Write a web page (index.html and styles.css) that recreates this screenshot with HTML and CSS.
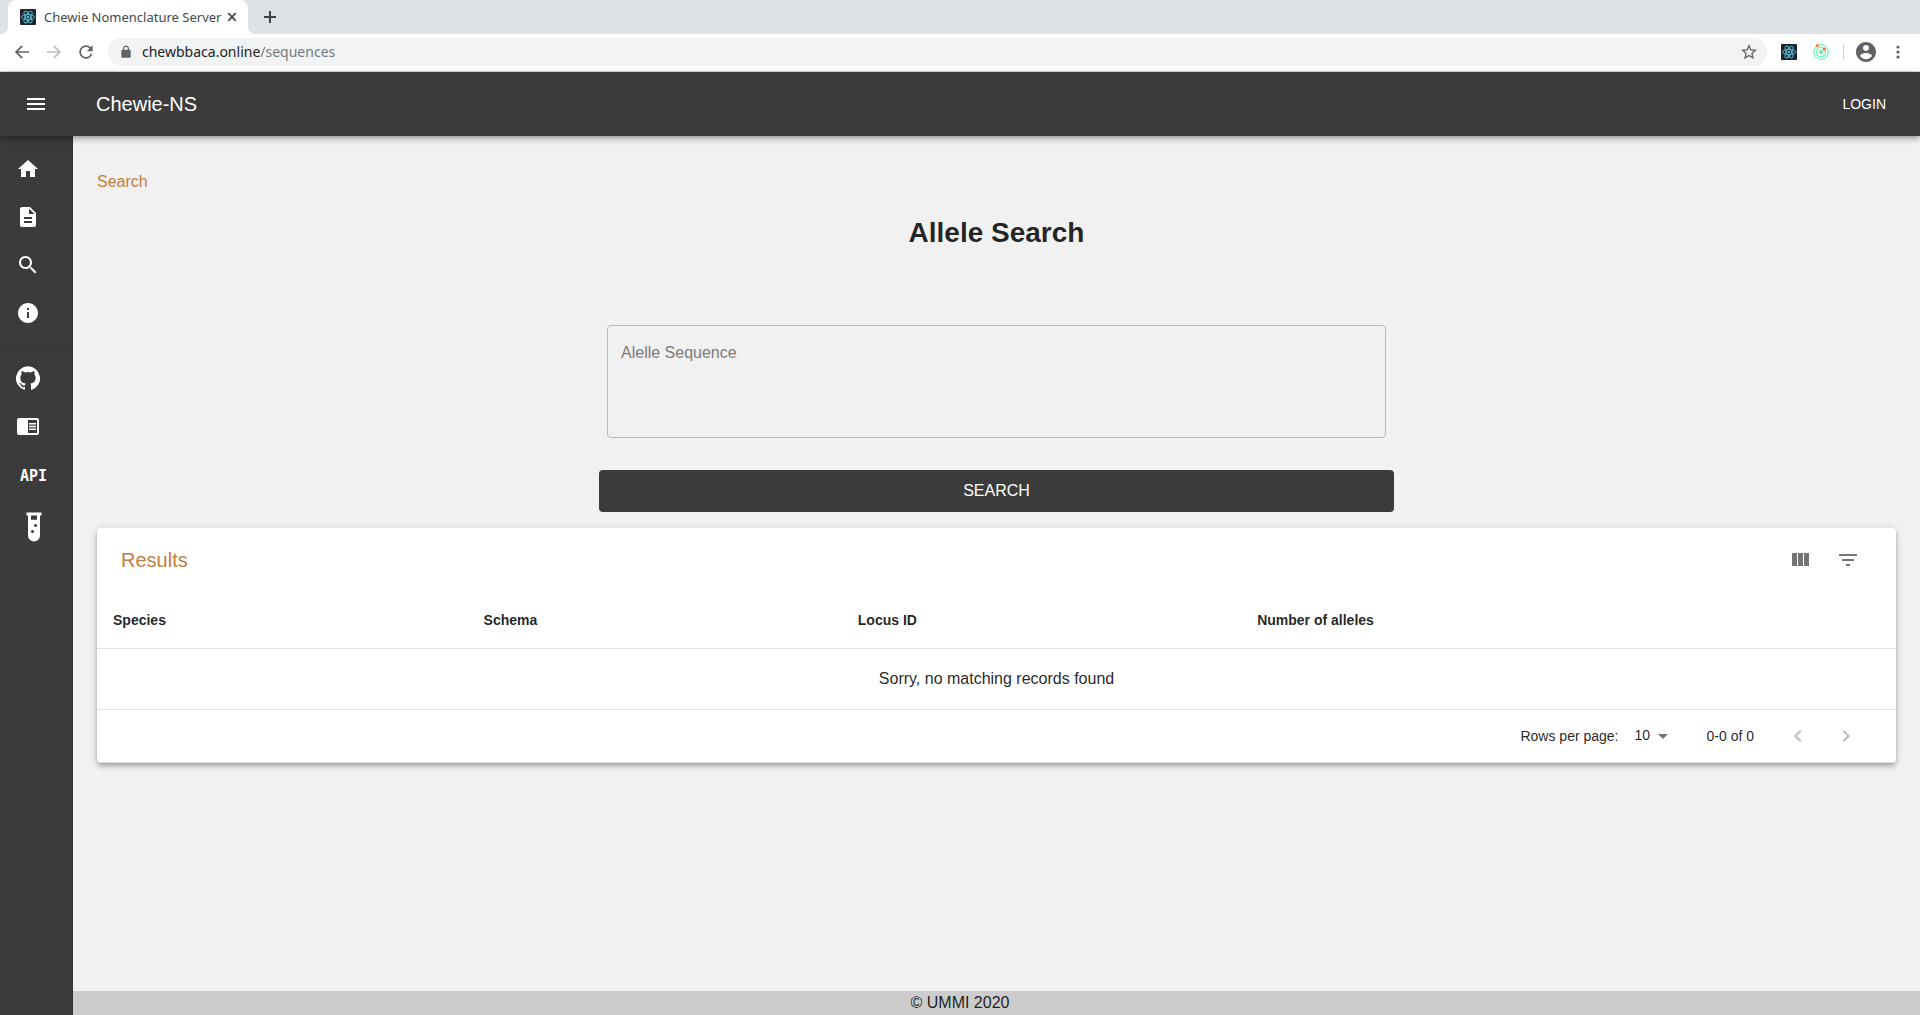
FILE: index.html
```html
<!DOCTYPE html>
<html lang="en">
<head>
<meta charset="utf-8">
<title>Chewie Nomenclature Server</title>
<link rel="stylesheet" href="styles.css">
</head>
<body>
<svg class="defs" aria-hidden="true">
  <symbol id="atom" viewBox="0 0 16 16">
    <rect width="16" height="16" rx="1" fill="#20232a"/>
    <g fill="none" stroke="#53c1de" stroke-width="0.9">
      <ellipse cx="8" cy="8" rx="6.6" ry="2.6"/>
      <ellipse cx="8" cy="8" rx="6.6" ry="2.6" transform="rotate(60 8 8)"/>
      <ellipse cx="8" cy="8" rx="6.6" ry="2.6" transform="rotate(120 8 8)"/>
    </g>
    <circle cx="8" cy="8" r="1.3" fill="#53c1de"/>
  </symbol>
</svg>
<div class="window">
  <header class="browser">
    <div class="tab-strip">
      <div class="tab">
        <svg class="icon-16"><use href="#atom"/></svg>
        <span class="tab-title">Chewie Nomenclature Server</span>
        <button class="bare" aria-label="Close tab"><svg class="icon-16" viewBox="0 0 16 16"><path d="M4.2 4.2l7.6 7.6M11.8 4.2l-7.6 7.6" stroke="#45494d" stroke-width="1.8"/></svg></button>
      </div>
      <button class="bare new-tab" aria-label="New tab"><svg class="icon-16" viewBox="0 0 16 16"><path d="M8 2v12M2 8h12" stroke="#3c4043" stroke-width="2"/></svg></button>
    </div>
    <div class="toolbar">
      <div class="nav-buttons">
        <button class="bare" aria-label="Back"><svg class="icon-20" viewBox="0 0 24 24" fill="#5f6368"><path d="M20.500 11H7.330l5.590-5.590L11.500 4 3.500 12l8 8 1.410-1.410L7.330 13H20.500v-2z"/></svg></button>
        <button class="bare" aria-label="Forward" disabled><svg class="icon-20" viewBox="0 0 24 24" fill="#bbbdbf"><path d="M12.500 4l-1.410 1.410L16.670 11H3.500v2h13.170l-5.580 5.590L12.500 20l8-8z"/></svg></button>
        <button class="bare" aria-label="Reload"><svg class="icon-20" viewBox="0 0 24 24" fill="#5f6368"><path d="M17.650 6.350C16.200 4.900 14.210 4 12 4c-4.420 0-7.990 3.580-7.990 8s3.570 8 7.990 8c3.730 0 6.840-2.550 7.730-6h-2.080c-.82 2.330-3.040 4-5.650 4-3.310 0-6-2.690-6-6s2.690-6 6-6c1.660 0 3.140.69 4.220 1.780L13 11h7V4l-2.350 2.350z"/></svg></button>
      </div>
      <div class="address">
        <svg class="icon-16 lock" viewBox="0 0 24 24" fill="#5f6368"><path d="M18 8h-1V6c0-2.760-2.240-5-5-5S7 3.240 7 6v2H6c-1.100 0-2 .9-2 2v10c0 1.100.9 2 2 2h12c1.100 0 2-.9 2-2V10c0-1.100-.9-2-2-2zM8.900 8V6c0-1.710 1.390-3.100 3.100-3.100s3.100 1.390 3.100 3.100v2z"/></svg>
        <span class="url">chewbbaca.online<span class="url-path">/sequences</span></span>
        <button class="bare" aria-label="Bookmark"><svg class="icon-16" viewBox="2 2 20 20" fill="#5f6368"><path d="M22 9.240l-7.190-.62L12 2 9.190 8.630 2 9.240l5.460 4.730L5.820 21 12 17.270 18.180 21l-1.630-7.030L22 9.240zM12 15.400l-3.760 2.270 1-4.280-3.320-2.880 4.380-.38L12 6.100l1.710 4.040 4.380.38-3.320 2.880 1 4.280L12 15.400z"/></svg></button>
      </div>
      <div class="extensions">
        <svg class="icon-16"><use href="#atom"/></svg>
        <svg class="icon-16" viewBox="0 0 16 16"><g fill="none" stroke="#6ff5bd" stroke-width="1.200"><circle cx="8" cy="8" r="7.300"/><circle cx="8" cy="8" r="4.600" stroke-width="1.400"/></g><circle cx="8" cy="8" r="2.200" fill="#6ff0a8"/><circle cx="4.300" cy="1.700" r="1.600" fill="#ff7a3c"/><circle cx="11.300" cy="5" r="1.600" fill="#ff5a36"/></svg>
        <span class="separator"></span>
        <button class="bare" aria-label="Profile"><svg class="icon-20" viewBox="2 2 20 20" fill="#5f6368"><path d="M12 2C6.480 2 2 6.480 2 12s4.480 10 10 10 10-4.480 10-10S17.520 2 12 2zm0 3c1.660 0 3 1.340 3 3s-1.340 3-3 3-3-1.340-3-3 1.340-3 3-3zm0 14.200c-2.500 0-4.710-1.280-6-3.220.03-1.990 4-3.080 6-3.080 1.990 0 5.970 1.090 6 3.080-1.290 1.940-3.500 3.220-6 3.220z"/></svg></button>
        <button class="bare" aria-label="Menu"><svg class="icon-16" viewBox="0 0 16 16" fill="#5f6368"><circle cx="8" cy="3" r="1.600"/><circle cx="8" cy="8" r="1.600"/><circle cx="8" cy="13" r="1.600"/></svg></button>
      </div>
    </div>
  </header>

  <div class="app">
    <header class="app-bar">
      <button class="bare" aria-label="Open drawer"><svg class="icon-24" viewBox="0 0 24 24" fill="#fff"><path d="M3 18h18v-2H3v2zm0-5h18v-2H3v2zm0-7v2h18V6H3z"/></svg></button>
      <span class="brand">Chewie-NS</span>
      <button class="bare login">LOGIN</button>
    </header>

    <nav class="drawer">
      <ul class="nav-list">
        <li><a href="#home" aria-label="Home"><svg class="icon-24" viewBox="0 0 24 24"><path d="M10 20v-6h4v6h5v-8h3L12 3 2 12h3v8z"/></svg></a></li>
        <li><a href="#schemas" aria-label="Schemas"><svg class="icon-24" viewBox="0 0 24 24"><path d="M14 2H6c-1.100 0-1.990.9-1.990 2L4 20c0 1.100.89 2 1.990 2H18c1.100 0 2-.9 2-2V8l-6-6zm2 16H8v-2h8v2zm0-4H8v-2h8v2zm-3-5V3.500L18.500 9H13z"/></svg></a></li>
        <li><a href="#search" aria-label="Search"><svg class="icon-24" viewBox="0 0 24 24"><path d="M15.500 14h-.79l-.28-.27C15.410 12.590 16 11.110 16 9.500 16 5.910 13.090 3 9.500 3S3 5.910 3 9.500 5.910 16 9.500 16c1.610 0 3.090-.59 4.230-1.570l.27.28v.79l5 4.990L20.490 19l-4.990-5zm-6 0C7.010 14 5 11.990 5 9.500S7.010 5 9.500 5 14 7.010 14 9.500 11.990 14 9.500 14z"/></svg></a></li>
        <li><a href="#about" aria-label="About"><svg class="icon-24" viewBox="0 0 24 24"><path d="M12 2C6.480 2 2 6.480 2 12s4.480 10 10 10 10-4.480 10-10S17.520 2 12 2zm1 15h-2v-6h2v6zm0-8h-2V7h2v2z"/></svg></a></li>
      </ul>
      <ul class="nav-list">
        <li><a href="#github" aria-label="GitHub"><svg class="icon-24" viewBox="0 0 24 24"><path d="M12 .3a12 12 0 0 0-3.800 23.400c.6.1.8-.3.8-.6v-2c-3.300.7-4-1.600-4-1.600-.6-1.400-1.400-1.800-1.400-1.800-1-.7.1-.7.1-.7 1.200 0 1.900 1.200 1.900 1.200 1 1.800 2.800 1.300 3.500 1 0-.8.4-1.300.7-1.600-2.700-.3-5.500-1.300-5.500-6 0-1.200.5-2.300 1.300-3.100-.2-.4-.6-1.600 0-3.200 0 0 1-.3 3.400 1.200a11.500 11.500 0 0 1 6 0c2.300-1.500 3.300-1.200 3.300-1.200.6 1.600.2 2.800 0 3.200.9.8 1.300 1.900 1.300 3.200 0 4.600-2.800 5.600-5.500 5.900.5.4.9 1 .9 2.200v3.300c0 .3.1.7.8.6A12 12 0 0 0 12 .3"/></svg></a></li>
        <li><a href="#docs" aria-label="Documentation"><svg class="icon-24" viewBox="0 0 24 24"><path d="M3 4h18a2 2 0 0 1 2 2v13a2 2 0 0 1-2 2H3a2 2 0 0 1-2-2V6a2 2 0 0 1 2-2zM12 6v13h9V6zM13 9h7v1.500h-7zM13 11.800h7v1.500h-7zM13 14.500h7V16h-7z" fill-rule="evenodd"/></svg></a></li>
        <li class="tall"><a href="#api" class="api">API</a></li>
        <li class="tall"><a href="#tutorial" class="inset" aria-label="Tutorial"><svg class="vial" viewBox="0 0 16 30"><path d="M.5.500h15v3h-1.500V23.500a6 6 0 0 1-12 0V3.500H.5zM5 3.500v4.200h6V3.500zM9.500 12a1.500 1.500 0 1 0 .01 0zM6.500 18a1.500 1.500 0 1 0 .01 0z" fill-rule="evenodd"/></svg></a></li>
      </ul>
    </nav>

    <main class="content">
      <a class="crumb" href="#search">Search</a>
      <h1>Allele Search</h1>
      <form class="search-form">
        <textarea rows="4" placeholder="Alelle Sequence" aria-label="Alelle Sequence"></textarea>
        <button class="submit" type="button">SEARCH</button>
      </form>

      <section class="card">
        <div class="card-head">
          <h2>Results</h2>
          <button class="bare action" aria-label="View columns"><svg class="icon-24" viewBox="0 0 24 24"><path d="M10 18h5V5h-5v13zm-6 0h5V5H4v13zM16 5v13h5V5h-5z"/></svg></button>
          <button class="bare action" aria-label="Filter table"><svg class="icon-24" viewBox="0 0 24 24"><path d="M10 18h4v-2h-4v2zM3 6v2h18V6H3zm3 7h12v-2H6v2z"/></svg></button>
        </div>
        <table>
          <colgroup><col class="col-species"><col class="col-schema"><col class="col-locus"><col></colgroup>
          <thead><tr><th>Species</th><th>Schema</th><th>Locus ID</th><th>Number of alleles</th></tr></thead>
          <tbody><tr><td colspan="4">Sorry, no matching records found</td></tr></tbody>
        </table>
        <div class="pagination">
          <label for="rows">Rows per page:</label>
          <div class="select">
            <select id="rows"><option>10</option><option>20</option><option>50</option></select>
            <svg class="icon-24 caret" viewBox="0 0 24 24"><path d="M7 10l5 5 5-5z"/></svg>
          </div>
          <span class="range">0-0 of 0</span>
          <button class="bare action" aria-label="Previous page" disabled><svg class="icon-24" viewBox="0 0 24 24"><path d="M15.410 16.590L10.830 12l4.580-4.590L14 6l-6 6 6 6z"/></svg></button>
          <button class="bare action" aria-label="Next page" disabled><svg class="icon-24" viewBox="0 0 24 24"><path d="M8.590 16.590L13.170 12 8.590 7.410 10 6l6 6-6 6z"/></svg></button>
        </div>
      </section>
    </main>

    <footer class="footer">© UMMI 2020</footer>
  </div>
</div>
</body>
</html>
```
FILE: styles.css
```css
*, *::before, *::after { box-sizing: border-box; }

body {
  margin: 0;
  background: #f1f1f1;
  color: rgba(0, 0, 0, 0.87);
  font: 16px/24px "Liberation Sans", Arial, sans-serif;
}

.defs { position: absolute; width: 0; height: 0; }

svg { display: block; flex: none; }
.icon-16 { width: 16px; height: 16px; }
.icon-20 { width: 20px; height: 20px; }
.icon-24 { width: 24px; height: 24px; }

.bare {
  display: flex;
  align-items: center;
  justify-content: center;
  padding: 0;
  border: 0;
  background: none;
  color: inherit;
  font: inherit;
}

.window { display: flex; flex-direction: column; min-height: 100vh; }

/* Browser chrome */
.browser { background: #fff; border-bottom: 1px solid #d5d7da; font-family: "Noto Sans", sans-serif; }

.tab-strip { display: flex; height: 34px; padding-left: 8px; background: #dee1e6; }

.tab {
  position: relative;
  display: flex;
  align-items: center;
  width: 240px;
  padding: 0 8px 0 12px;
  border-radius: 8px 8px 0 0;
  background: #fff;
  color: #45494d;
}
.tab::before, .tab::after {
  content: "";
  position: absolute;
  bottom: 0;
  width: 8px;
  height: 8px;
}
.tab::before { left: -8px; background: radial-gradient(circle at 0 0, #dee1e6 8px, #fff 8px); }
.tab::after { right: -8px; background: radial-gradient(circle at 100% 0, #dee1e6 8px, #fff 8px); }
.tab-title { flex: 1; padding-left: 8px; font-size: 13px; line-height: 16px; white-space: nowrap; }
.new-tab { margin-left: 14px; }

.toolbar { display: flex; align-items: center; height: 37px; padding: 0 12px 1px; }
.nav-buttons { display: flex; gap: 12px; width: 96px; }

.address {
  display: flex;
  flex: 1;
  align-items: center;
  gap: 8px;
  height: 28px;
  padding: 0 10px;
  border-radius: 14px;
  background: #f1f3f4;
}
.lock { height: 14px; }
.url { flex: 1; color: #202124; font-size: 14px; line-height: 20px; }
.url-path { color: #77797d; }

.extensions { display: flex; align-items: center; gap: 14px; padding-left: 14px; }
.extensions > svg + svg { margin-left: 2px; }
.extensions .bare:last-child { margin-right: 2px; }
.separator { width: 1px; height: 16px; margin-right: -2px; background: #cbcdd0; }

/* Application shell */
.app {
  flex: 1;
  display: grid;
  grid-template-rows: 64px 1fr 24px;
  grid-template-columns: 73px 1fr;
}

.app-bar {
  grid-row: 1;
  grid-column: 1 / 3;
  z-index: 2;
  display: flex;
  align-items: center;
  padding: 0 24px;
  background: #3b3b3b;
  color: #fff;
  box-shadow: 0 2px 4px -1px rgba(0, 0, 0, 0.2), 0 4px 5px rgba(0, 0, 0, 0.14), 0 1px 10px rgba(0, 0, 0, 0.12);
}
.brand { flex: 1; padding-left: 48px; font-size: 20px; }
.login { padding: 0 10px; font-size: 14px; }

.drawer {
  grid-row: 2 / 4;
  grid-column: 1;
  z-index: 1;
  padding-top: 1px;
  border-right: 1px solid #333;
  background: #3b3b3b;
}
.nav-list { margin: 0; padding: 8px 0; list-style: none; }
.nav-list + .nav-list { border-top: 1px solid #343434; }
.nav-list a { display: flex; align-items: center; height: 48px; padding-left: 16px; color: #fff; fill: #fff; text-decoration: none; }
.nav-list .tall a { height: 51px; }
.nav-list .inset { padding-left: 26px; }
.nav-list .api { padding-left: 20px; font: bold 15px "DejaVu Sans Mono", monospace; }
.vial { width: 16px; height: 30px; }

.content { grid-row: 2; grid-column: 2; padding: 34px 24px 24px; }
.crumb { display: block; color: #c27e3f; text-decoration: none; }
h1 { margin: 22px 0 76px; font-size: 28px; line-height: 33px; text-align: center; }

.search-form { width: 100%; max-width: 795px; margin: 0 auto 16px; padding: 0; }
textarea {
  display: block;
  width: calc(100% - 16px);
  margin: 0 8px 32px;
  padding: 17px 13px 18px;
  border: 1px solid #b9b9b9;
  border-radius: 4px;
  background: transparent;
  color: inherit;
  font: 16px/19px "Liberation Sans", Arial, sans-serif;
  resize: none;
}
textarea::placeholder { color: #7b7b7b; opacity: 1; }
.submit {
  display: block;
  width: 100%;
  height: 42px;
  border: 0;
  border-radius: 4px;
  background: #3b3b3b;
  color: #fff;
  font: 16px "Liberation Sans", Arial, sans-serif;
}

/* Results table */
.card {
  border-radius: 4px;
  background: #fff;
  box-shadow: 0 2px 4px -1px rgba(0, 0, 0, 0.2), 0 4px 5px rgba(0, 0, 0, 0.14), 0 1px 10px rgba(0, 0, 0, 0.12);
}
.card-head { display: flex; align-items: center; height: 64px; padding: 0 24px; }
h2 { flex: 1; margin: 0; color: #c27e3f; font-size: 20px; font-weight: normal; }
.action { width: 48px; height: 48px; fill: #757575; }
.action:disabled { fill: #bdbdbd; }

table { width: 100%; border-collapse: separate; border-spacing: 0; table-layout: fixed; }
.col-species { width: 20.6%; }
.col-schema { width: 20.8%; }
.col-locus { width: 22.2%; }
th { padding: 16px; border-bottom: 1px solid #e0e0e0; font-size: 14px; text-align: left; }
td { padding: 18px 16px; border-bottom: 1px solid #e0e0e0; text-align: center; }

.pagination {
  display: flex;
  align-items: center;
  justify-content: flex-end;
  height: 53px;
  padding-right: 26px;
  border-bottom: 1px solid #e0e0e0;
  border-radius: 0 0 4px 4px;
  font-size: 14px;
}
.select { position: relative; margin: 0 32px 0 8px; }
select {
  display: block;
  width: 48px;
  height: 24px;
  padding: 0 24px 2px 8px;
  border: 0;
  background: none;
  color: inherit;
  font: 14px "Liberation Sans", Arial, sans-serif;
  appearance: none;
}
.caret { position: absolute; top: 0; right: 0; fill: #757575; pointer-events: none; }
.range { padding-right: 20px; }

.footer { grid-row: 3; grid-column: 1 / 3; background: #ccc; text-align: center; }
```
